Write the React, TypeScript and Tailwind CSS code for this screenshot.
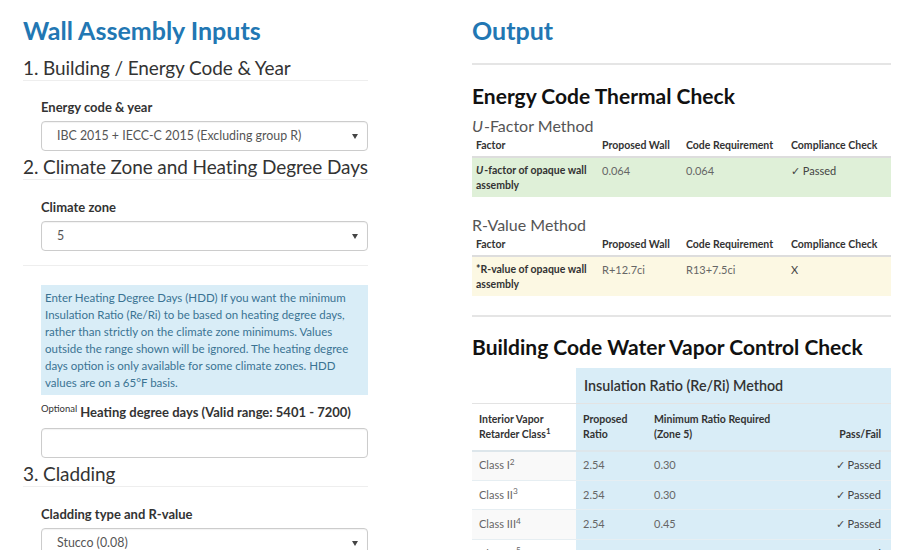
const font = { fontFamily: 'Lato, "Noto Sans", sans-serif' }

function Caret() {
  return (
    <svg width="6" height="5" viewBox="0 0 6 5" className="shrink-0">
      <path d="M0 0 L6 0 L3 5 Z" fill="#444" />
    </svg>
  )
}

function SelectBox({ value }: { value: string }) {
  return (
    <div className="mt-[5px] flex h-[30px] items-center justify-between rounded-[4px] border border-[#ccc] bg-white pl-[15px] pr-[9px] text-[12.4px] text-[#555] shadow-[inset_0_1px_1px_rgba(0,0,0,0.05)]">
      <span>{value}</span>
      <Caret />
    </div>
  )
}

function SectionTitle({ children, className = '' }: { children: React.ReactNode; className?: string }) {
  return (
    <h2 className={`whitespace-nowrap border-b border-[#eee] text-[19px] leading-[24px] tracking-[-0.1px] text-[#333] ${className}`}>
      {children}
    </h2>
  )
}

function Label({ children, className = '' }: { children: React.ReactNode; className?: string }) {
  return <div className={`whitespace-nowrap text-[13px] font-bold leading-[17px] text-[#333] ${className}`}>{children}</div>
}

type Row = { factor: React.ReactNode; proposed: string; code: string; check: string }

function ThermalTable({ row, tone }: { row: Row; tone: string }) {
  return (
    <table className="w-full border-collapse text-[10.5px]">
      <thead>
        <tr className="border-b-2 border-[#ddd] text-left text-[#333]">
          <th className="w-[126px] px-[4px] pb-[4px] pt-[2px] font-bold leading-[14px]">Factor</th>
          <th className="w-[84px] px-[4px] pb-[4px] pt-[2px] font-bold leading-[14px]">Proposed Wall</th>
          <th className="w-[105px] px-[4px] pb-[4px] pt-[2px] font-bold leading-[14px]">Code Requirement</th>
          <th className="px-[4px] pb-[4px] pt-[2px] font-bold leading-[14px]">Compliance Check</th>
        </tr>
      </thead>
      <tbody>
        <tr className={`${tone} align-top leading-[15px]`}>
          <td className="px-[4px] pb-[4px] pt-[5px] font-bold text-[#333]">{row.factor}</td>
          <td className="px-[4px] pb-[4px] pt-[5px] text-[11px] text-[#666]">{row.proposed}</td>
          <td className="px-[4px] pb-[4px] pt-[5px] text-[11px] text-[#666]">{row.code}</td>
          <td className="px-[4px] pb-[4px] pt-[5px] text-[11px] text-[#444]">{row.check}</td>
        </tr>
      </tbody>
    </table>
  )
}

const vaporRows = [
  { cls: 'Class I', sup: '2', ratio: '2.54', min: '0.30', striped: true },
  { cls: 'Class II', sup: '3', ratio: '2.54', min: '0.30', striped: false },
  { cls: 'Class III', sup: '4', ratio: '2.54', min: '0.45', striped: true },
  { cls: 'Class III', sup: '5', ratio: '2.54', min: '0.45', striped: false }
]

export default function App() {
  return (
    <div className="flex h-[550px] w-[900px] overflow-hidden bg-white pl-[23px] pr-[9px]" style={font}>
      <div className="w-[345px] shrink-0">
        <h1 className="mt-[15px] text-[25px] font-bold leading-[30px] text-[#2277b3]">Wall Assembly Inputs</h1>
        <SectionTitle className="mt-[11px]">1. Building / Energy Code &amp; Year</SectionTitle>

        <div className="pl-[18px]">
          <Label className="mt-[18px]">Energy code &amp; year</Label>
          <SelectBox value="IBC 2015 + IECC-C 2015 (Excluding group R)" />
        </div>

        <SectionTitle className="mt-[4px]">2. Climate Zone and Heating Degree Days</SectionTitle>

        <div className="pl-[18px]">
          <Label className="mt-[19px]">Climate zone</Label>
          <SelectBox value="5" />
        </div>

        <div className="mt-[14px] border-t border-[#eee]" />

        <div className="pl-[18px]">
          <div className="mt-[19px] bg-[#d9edf7] px-[4px] pb-[4px] pt-[4px] text-[11.5px] leading-[17px] text-[#3a7393]">
            Enter Heating Degree Days (HDD) If you want the minimum Insulation Ratio (Re/Ri) to be based on heating degree days, rather than strictly on the climate zone minimums. Values outside the range shown will be ignored. The heating degree days option is only available for some climate zones. HDD values are on a 65°F basis.
          </div>
          <Label className="mt-[9px]">
            <span className="relative top-[-5px] mr-[3px] text-[9.5px] font-normal">Optional</span>
            Heating degree days (Valid range: 5401 - 7200)
          </Label>
          <div className="mt-[6px] h-[30px] rounded-[4px] border border-[#ccc] bg-white shadow-[inset_0_1px_1px_rgba(0,0,0,0.05)]" />
        </div>

        <SectionTitle className="mt-[4px]">3. Cladding</SectionTitle>

        <div className="pl-[18px]">
          <Label className="mt-[19px]">Cladding type and R-value</Label>
          <SelectBox value="Stucco (0.08)" />
        </div>
      </div>

      <div className="ml-[104px] w-[419px] shrink-0">
        <h1 className="mt-[15px] text-[25px] font-bold leading-[30px] text-[#2277b3]">Output</h1>
        <div className="mt-[18px] border-t-2 border-[#e5e5e5]" />

        <h2 className="mt-[18px] text-[21px] font-bold leading-[26px] text-[#111]">Energy Code Thermal Check</h2>
        <div className="mt-[7px] text-[16px] leading-[20px] text-[#555]">
          <i className="pr-[1px]">U</i>-Factor Method
        </div>
        <ThermalTable
          tone="bg-[#dff0d8]"
          row={{
            factor: (
              <>
                <i className="pr-[1px]">U</i>-factor of opaque wall assembly
              </>
            ),
            proposed: '0.064',
            code: '0.064',
            check: '✓ Passed'
          }}
        />

        <div className="mt-[18px] text-[16px] leading-[20px] text-[#555]">R-Value Method</div>
        <ThermalTable
          tone="bg-[#fcf8e3]"
          row={{
            factor: <>*R-value of opaque wall assembly</>,
            proposed: 'R+12.7ci',
            code: 'R13+7.5ci',
            check: 'X'
          }}
        />

        <div className="mt-[19px] border-t-2 border-[#e5e5e5]" />
        <h2 className="mt-[17px] text-[21px] font-bold leading-[26px] text-[#111]">Building Code Water Vapor Control Check</h2>

        <table className="mt-[8px] w-full border-collapse text-[11px]">
          <thead>
            <tr className="border-b border-[#e3e3e3]">
              <th className="w-[104px] bg-white" />
              <th colSpan={3} className="h-[35px] bg-[#d9edf7] px-[8px] text-left text-[14.3px] font-semibold text-[#333]">
                Insulation Ratio (Re/Ri) Method
              </th>
            </tr>
            <tr className="border-b-2 border-[#dde6eb] text-left align-bottom text-[10.5px] font-bold leading-[15px] text-[#333]">
              <th className="px-[7px] pb-[8px] pt-[8px] font-bold">
                Interior Vapor Retarder Class<sup>1</sup>
              </th>
              <th className="w-[71px] bg-[#d9edf7] px-[7px] pb-[8px] font-bold">Proposed Ratio</th>
              <th className="w-[150px] bg-[#d9edf7] px-[7px] pb-[8px] font-bold">Minimum Ratio Required (Zone 5)</th>
              <th className="bg-[#d9edf7] px-[10px] pb-[8px] text-right font-bold">Pass/Fail</th>
            </tr>
          </thead>
          <tbody className="text-[#666]">
            {vaporRows.map((r, i) => (
              <tr key={i} className="h-[29.5px] border-b border-[#e6eef2]">
                <td className={`px-[7px] ${r.striped ? 'bg-[#f9f9f9]' : 'bg-white'}`}>
                  {r.cls}
                  <sup>{r.sup}</sup>
                </td>
                <td className="bg-[#d9edf7] px-[7px]">{r.ratio}</td>
                <td className="bg-[#d9edf7] px-[7px]">{r.min}</td>
                <td className="bg-[#d9edf7] px-[10px] text-right text-[#444]">✓ Passed</td>
              </tr>
            ))}
          </tbody>
        </table>
      </div>
    </div>
  )
}
